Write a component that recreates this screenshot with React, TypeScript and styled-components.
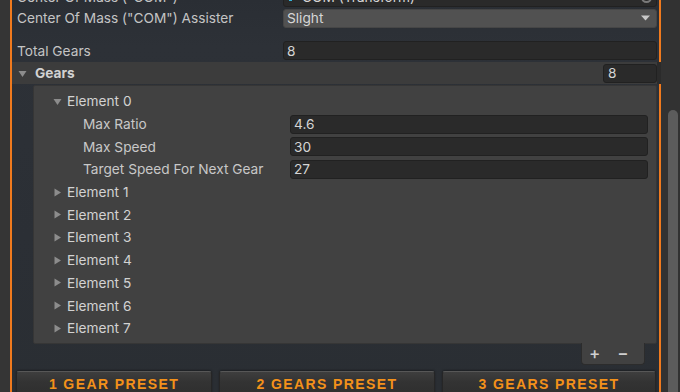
import React from "react";
import styled, { createGlobalStyle } from "styled-components";

const Global = createGlobalStyle`
  html, body { margin: 0; padding: 0; background: #333333; overflow: hidden; }
  body { font-family: Inter, "Noto Sans", sans-serif; -webkit-font-smoothing: antialiased; }
`;

const Frame = styled.div`
  display: flex;
  width: 680px;
  height: 392px;
  overflow: hidden;
  background: #333333;
`;

const LeftGutter = styled.div`
  width: 10px;
  flex: none;
  background: #353535;
`;

const Panel = styled.div`
  width: 645px;
  flex: none;
  border-left: 2px solid #f07a1e;
  border-right: 2px solid #f07a1e;
  background: linear-gradient(180deg, #2a2e34 0%, #2d3137 12%, #2b2f35 60%, #2a2e33 100%);
  display: flex;
  flex-direction: column;
  padding-right: 2px;
`;

const RightGutter = styled.div`
  flex: 1;
  background: #323232;
  padding: 110px 2px 0 7px;
`;

const Thumb = styled.div`
  width: 10px;
  height: 320px;
  border-radius: 5px;
  background: #5c5c5c;
`;

const PropRow = styled.div<{ $h: number; $mt?: number }>`
  display: flex;
  align-items: center;
  height: ${(p) => p.$h}px;
  margin-top: ${(p) => p.$mt ?? 0}px;
  padding-left: 5px;
  flex: none;
`;

const Label = styled.div<{ $w: number }>`
  width: ${(p) => p.$w}px;
  flex: none;
  color: #c4c4c4;
  font-size: 13.7px;
  white-space: nowrap;
`;

const Field = styled.div`
  flex: 1;
  height: 19px;
  box-sizing: border-box;
  background: #2a2a2a;
  border: 1px solid #212121;
  border-radius: 3px;
  color: #d4d4d4;
  font-size: 13.7px;
  display: flex;
  align-items: center;
  padding-left: 3px;
  position: relative;
`;

const ObjectField = styled(Field)`
  gap: 3px;
  padding-left: 5px;
`;

const PickButton = styled.div`
  position: absolute;
  right: 4px;
  top: 3px;
  width: 11px;
  height: 11px;
  border-radius: 50%;
  border: 2px solid #7a7a7a;
  box-sizing: border-box;
`;

const Dropdown = styled.div`
  flex: 1;
  height: 19px;
  box-sizing: border-box;
  background: #515151;
  border: 1px solid #464646;
  border-radius: 3px;
  color: #d6d6d6;
  font-size: 13.7px;
  display: flex;
  align-items: center;
  justify-content: space-between;
  padding: 0 6px 0 3px;
`;

const Spacer = styled.div<{ $h: number }>`
  height: ${(p) => p.$h}px;
  flex: none;
`;

const GearsHeader = styled.div`
  display: flex;
  align-items: center;
  height: 22px;
  flex: none;
  background: #3c3c3c;
  padding-left: 6px;
  margin-top: 1px;
  position: relative;

  &::after {
    content: "";
    position: absolute;
    top: 0;
    bottom: 0;
    right: -4px;
    width: 4px;
    background: #2b2b2b;
  }
`;

const HeaderTitle = styled.div`
  flex: 1;
  color: #d2d2d2;
  font-size: 13.7px;
  font-weight: 700;
  margin-left: 8px;
`;

const SizeField = styled(Field)`
  flex: none;
  width: 54px;
  height: 19px;
  padding-left: 4px;
`;

const ListBox = styled.div`
  margin: 1px 0 0 21px;
  background: #414141;
  border: 1px solid #363636;
  border-radius: 2px;
  padding: 4px 0 3px 0;
  display: flex;
  flex-direction: column;
  flex: none;
`;

const ItemRow = styled.div<{ $indent: number }>`
  display: flex;
  align-items: center;
  height: 22.7px;
  padding-left: ${(p) => p.$indent}px;
  padding-right: 8px;
  color: #d2d2d2;
  font-size: 13.7px;
`;

const ItemText = styled.span`
  margin-left: 5px;
  white-space: nowrap;
`;

const NestedLabel = styled.div`
  width: 207px;
  flex: none;
  color: #c8c8c8;
  white-space: nowrap;
`;

const FooterRow = styled.div`
  display: flex;
  justify-content: flex-end;
  padding-right: 12px;
  flex: none;
`;

const FooterTab = styled.div`
  width: 64px;
  height: 22px;
  box-sizing: border-box;
  margin-top: -1px;
  background: #414141;
  border: 1px solid #2c2c2c;
  border-top: none;
  border-radius: 0 0 4px 4px;
  display: flex;
  align-items: center;
  gap: 17px;
  padding: 0 0 0 7px;
  color: #cfcfcf;
  font-size: 17px;
  font-weight: 500;
`;

const ButtonBar = styled.div`
  display: grid;
  grid-template-columns: 196fr 216fr 214fr;
  gap: 7px;
  padding: 0 1px 0 4px;
  margin-top: 6px;
  flex: none;
`;

const PresetButton = styled.div`
  height: 26px;
  box-sizing: border-box;
  background: linear-gradient(180deg, #3e3e3e 0%, #333333 40%, #2e2e2e 100%);
  border-top: 1px solid #575757;
  border-left: 1px solid #262626;
  border-right: 1px solid #262626;
  border-radius: 3px 3px 0 0;
  box-shadow: 0 -1px 2px rgba(0, 0, 0, 0.35);
  color: #f3911a;
  font-family: "Liberation Sans", Arial, sans-serif;
  font-weight: 700;
  font-size: 14px;
  letter-spacing: 1.4px;
  text-align: center;
  padding-top: 4px;
  white-space: nowrap;
`;

const Tri = ({ open }: { open: boolean }) => (
  <svg width="9" height="9" viewBox="0 0 9 9" style={{ flex: "none" }}>
    {open ? (
      <polygon points="0.5,2 8.5,2 4.5,8" fill="#8c8c8c" />
    ) : (
      <polygon points="1.5,0.5 8,4.5 1.5,8.5" fill="#8c8c8c" />
    )}
  </svg>
);

const DropArrow = () => (
  <svg width="9" height="6" viewBox="0 0 9 6">
    <polygon points="0,0.5 9,0.5 4.5,5.5" fill="#c8c8c8" />
  </svg>
);

const TransformIcon = () => (
  <svg width="10" height="12" viewBox="0 0 10 12">
    <rect x="0" y="2" width="3" height="8" fill="#36b4d8" />
    <rect x="4" y="3" width="5" height="5" fill="#f0642a" />
  </svg>
);

const elements = [1, 2, 3, 4, 5, 6, 7];

export default function App() {
  return (
    <>
      <Global />
      <Frame>
        <LeftGutter />
        <Panel>
          <PropRow $h={20} $mt={-13}>
            <Label $w={266}>Center Of Mass ("COM")</Label>
            <ObjectField>
              <TransformIcon />
              COM (Transform)
              <PickButton />
            </ObjectField>
          </PropRow>
          <PropRow $h={20} $mt={1}>
            <Label $w={266}>Center Of Mass ("COM") Assister</Label>
            <Dropdown>
              Slight
              <DropArrow />
            </Dropdown>
          </PropRow>
          <Spacer $h={12} />
          <PropRow $h={21}>
            <Label $w={266}>Total Gears</Label>
            <Field>8</Field>
          </PropRow>
          <GearsHeader>
            <Tri open />
            <HeaderTitle>Gears</HeaderTitle>
            <SizeField>8</SizeField>
          </GearsHeader>
          <ListBox>
            <ItemRow $indent={19}>
              <Tri open />
              <ItemText>Element 0</ItemText>
            </ItemRow>
            <ItemRow $indent={49}>
              <NestedLabel>Max Ratio</NestedLabel>
              <Field>4.6</Field>
            </ItemRow>
            <ItemRow $indent={49}>
              <NestedLabel>Max Speed</NestedLabel>
              <Field>30</Field>
            </ItemRow>
            <ItemRow $indent={49}>
              <NestedLabel>Target Speed For Next Gear</NestedLabel>
              <Field>27</Field>
            </ItemRow>
            {elements.map((n) => (
              <ItemRow key={n} $indent={19}>
                <Tri open={false} />
                <ItemText>Element {n}</ItemText>
              </ItemRow>
            ))}
          </ListBox>
          <FooterRow>
            <FooterTab>
              <span>+</span>
              <span>−</span>
            </FooterTab>
          </FooterRow>
          <ButtonBar>
            <PresetButton>1 GEAR PRESET</PresetButton>
            <PresetButton>2 GEARS PRESET</PresetButton>
            <PresetButton>3 GEARS PRESET</PresetButton>
          </ButtonBar>
        </Panel>
        <RightGutter>
          <Thumb />
        </RightGutter>
      </Frame>
    </>
  );
}
